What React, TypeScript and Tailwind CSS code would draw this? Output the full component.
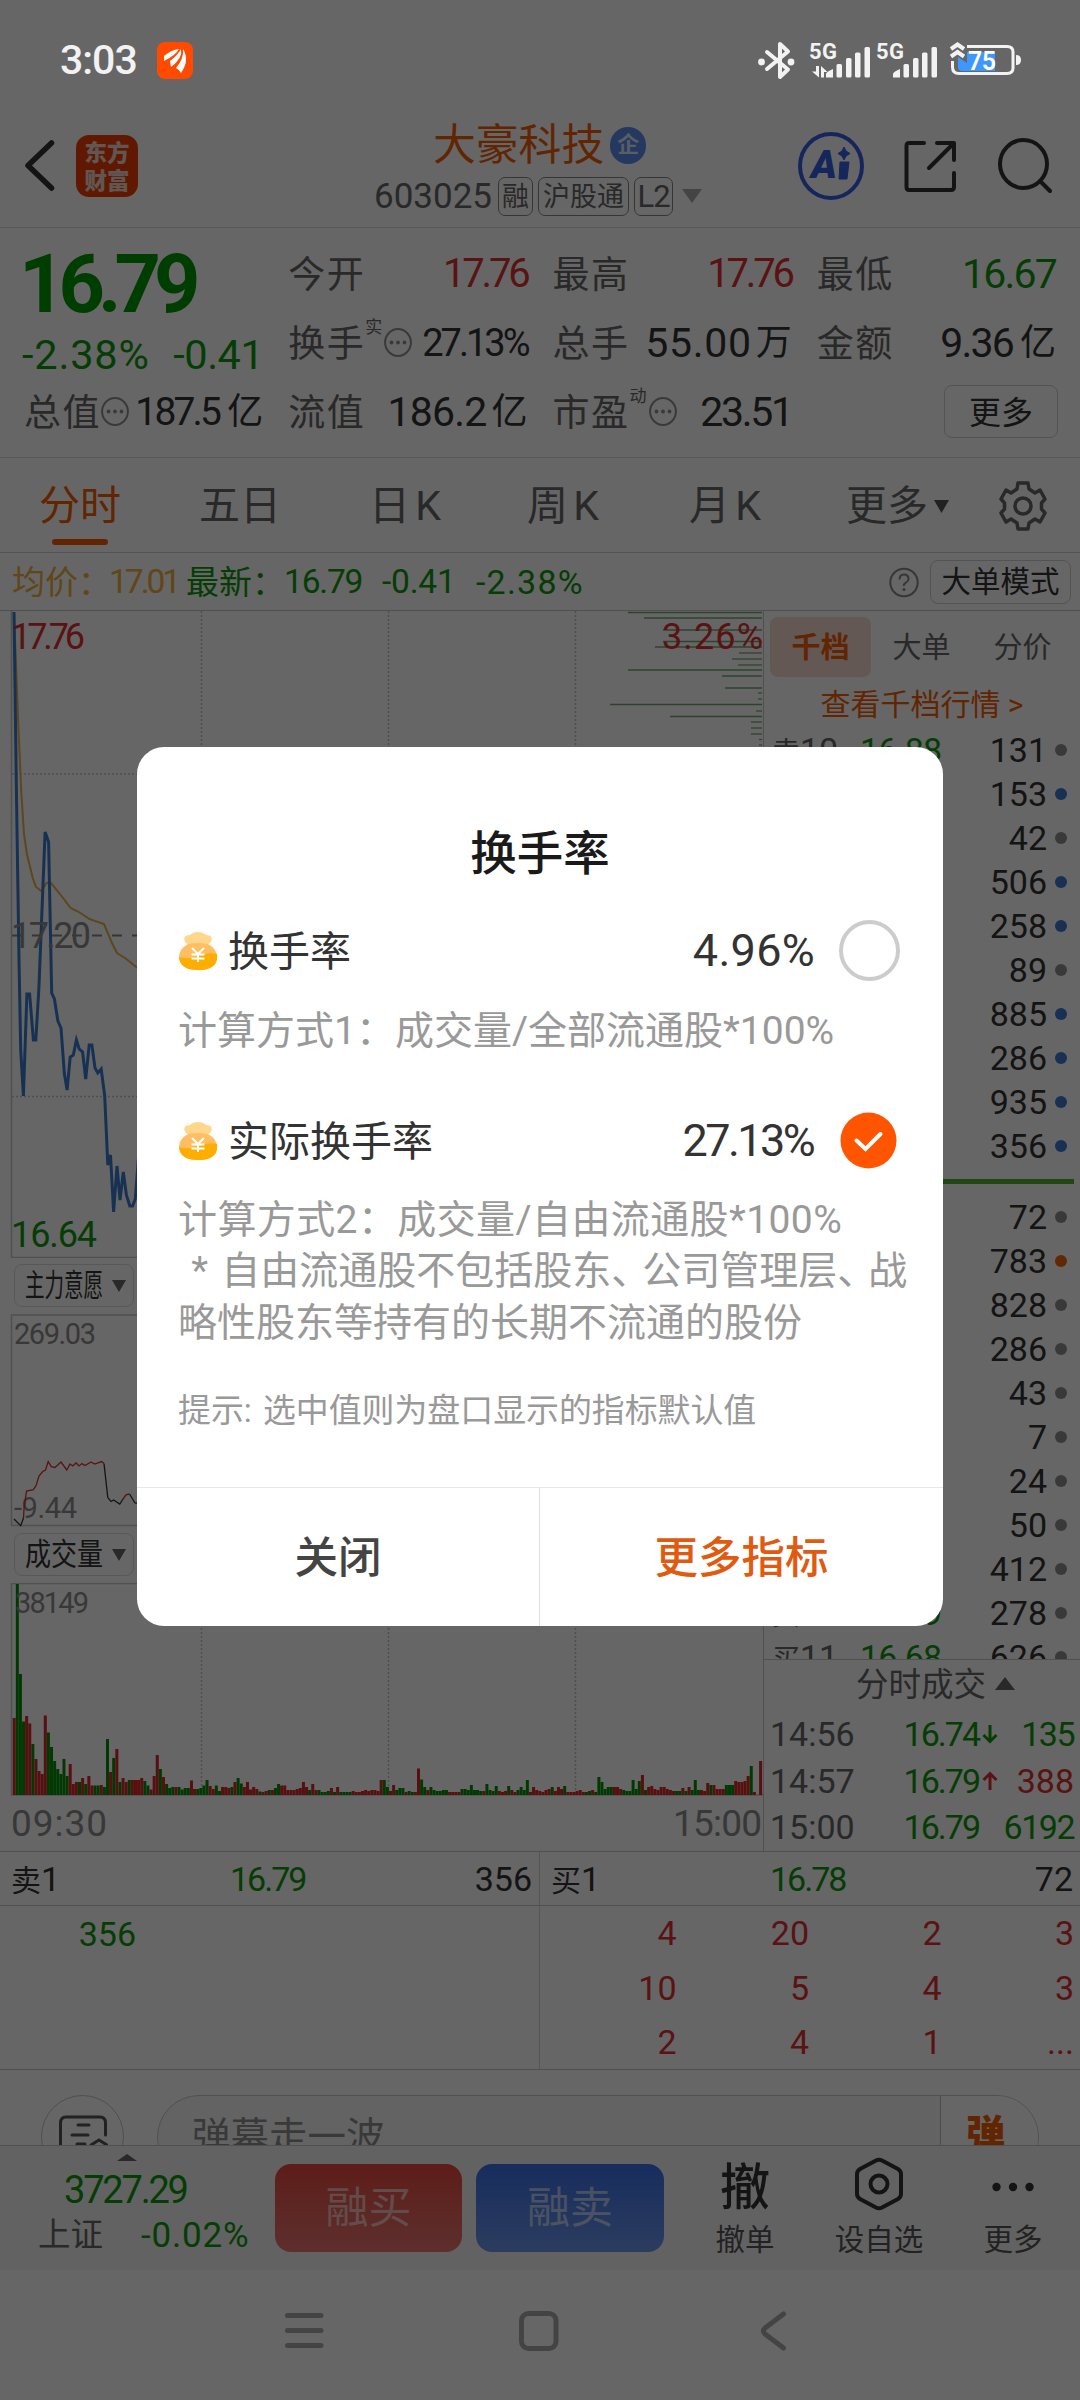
import type { ReactNode } from "react";

const sellSizes = [131, 153, 42, 506, 258, 89, 885, 286, 935, 356];
const sellDots = "gbgbbgbbbb";
const buySizes = [72, 783, 828, 286, 43, 7, 24, 50, 412, 278, 626];
const buyDots = "gogggggggggg";

const dotColor: Record<string, string> = {
  g: "bg-[#8f8f92]",
  b: "bg-[#3b78d0]",
  o: "bg-[#f2640a]",
};

const trades = [
  { time: "14:56", price: "16.74", arrow: "down", size: "135", red: false },
  { time: "14:57", price: "16.79", arrow: "up", size: "388", red: true },
  { time: "15:00", price: "16.79", arrow: "", size: "6192", red: false },
];

const buyQueue = ["4", "20", "2", "3", "10", "5", "4", "3", "2", "4", "1", "..."];

// one bar per minute, positive = up (red), negative = down (green)
const volumes = [
  77, -211, -121, -73.5, 79, 71.5, -51, 36, 24, 21, 79.5, -62.5, -48, -34, -26, -21, -36, -19, 31, 11,
  13, -13, 17, -11, 19, 9.5, -9.5, -9.5, 10, -8, -56, 23, -37, 46, -13, 17, 13, -15, 15, 15,
  15, 17, -14, -9.5, 5.5, 19, 40, -26, 18, -11, -7, -8, 8, -8, -5.5, -7, -7, 14.5, 6, -6,
  -7, -9.5, -15, 9, 6, -9.5, -4, 8, 8, 7, -8, 13, -17, -11.5, 8, 13, 5.5, 8, 6, -3.5,
  3, 4, -5, 5, -7, -11, 9.5, 9.5, 5, 5, 5, 6, 7, 13, 8, -5, 11, 5, -5, -3,
  -3, -4, 7, -3, 8, -3, -3, -3, -3, 4, 3, 3, 4, 5, 4, 5, 5, 4, 15, -15,
  -8, 4, 10, -5, -7, -7, 3, -4, -3, 3, 26.5, -15.5, -8, 5, -8, -5, -4, -4, -5, -5,
  3, 3, 3, 3, -6, -6, -5, -10, -5, -5, -4, 4, -11, -5, -4, -9, 4, 3, 4, -9,
  5, 3, -5, -8, -5, -15, 3, 8, 5, 4, 3, 5, 6, -8, 4, 8, 6, -9, 3, 3,
  3, 4, 5, 3, -3, -4, 5, -3, -18, -13, -6, -8, -8, 8, 8, 6, -5, -4, -4, -15,
  -6, -14, 20, -5, 8, 9, 6, 5, 8, 8, 6, 5, 4, -4, -4, 7, -4, 8, -5, -15,
  -5, 5, 4, 12, -10, 10, 6, 6, 6, -10, -10, -10, 14, 13, 13, 14, 19, -29, 3, 0,
  34,
];

const depthBars = [
  [628, 611.5], [644, 617], [663, 629], [663, 640.5], [655, 646], [739, 652], [732, 658], [738, 664],
  [628, 669], [722, 675], [725, 687], [758, 692], [758, 698], [610, 703.5], [756, 710], [670, 715.5],
  [751, 721], [751, 727], [751, 733], [759, 738.5], [759, 744],
];

function MoreDots() {
  return (
    <svg width="28" height="29" viewBox="0 0 28 29" className="shrink-0">
      <ellipse cx="14" cy="14.5" rx="12.9" ry="13.4" fill="none" stroke="#8f8f8f" strokeWidth="2" />
      <circle cx="7.5" cy="14.5" r="1.9" fill="#8f8f8f" />
      <circle cx="14" cy="14.5" r="1.9" fill="#8f8f8f" />
      <circle cx="20.5" cy="14.5" r="1.9" fill="#8f8f8f" />
    </svg>
  );
}

function Quote({ label, sup, dots, children }: { label: string; sup?: string; dots?: boolean; children: ReactNode }) {
  return (
    <div className="flex h-[69px] items-center">
      <span className="whitespace-nowrap pt-[3px] text-[37px] tracking-[1.500px] text-[#666]">{label}</span>
      {sup && <span className="mb-[31px] w-[19px] text-[17px] text-[#666]">{sup}</span>}
      {dots && <MoreDots />}
      <span className="ml-auto flex items-center whitespace-nowrap pt-px text-[#333]">{children}</span>
    </div>
  );
}

function StatusBar() {
  return (
    <div className="relative z-20 flex h-[119px] items-start text-[#f2f2f2]">
      <span className="ml-[60px] mt-[40px] text-[41px] font-medium tracking-[-1px]">3:03</span>
      <svg width="36" height="37" viewBox="0 0 36 37" className="absolute left-[157px] top-[42px]">
        <rect width="36" height="37" rx="8" fill="#ff4a00" />
        <path d="M7 14 Q14 8 22 7 Q19 13 7 19Z M13 19 Q20 14 24 7 Q26 16 14 25Z M19 26 Q27 17 26 7 Q33 18 24 31Q23 28 19 26Z" fill="#fff" />
      </svg>
      <svg width="270" height="44" viewBox="0 0 270 44" className="absolute left-[755px] top-[38px]">
        <path d="M12 14 L33 31.500 L25 39 V6 L33 13.500 L12 31" fill="none" stroke="#f2f2f2" strokeWidth="4" strokeLinejoin="round" strokeLinecap="round" />
        <circle cx="6.500" cy="24" r="3.400" fill="#f2f2f2" />
        <circle cx="36" cy="24" r="3.400" fill="#f2f2f2" />
        <g fill="#f2f2f2">
          <text x="54" y="21" fontSize="22" fontWeight="700" textLength="28">5G</text>
          <text x="121" y="21" fontSize="22" fontWeight="700" textLength="28">5G</text>
          <path d="M61 28 h3 v11.500 l-7 -6 h4z M66 39.500 v-11.500 l6.500 6 h-3.500 v5.500z" />
          {[0, 67].map((x) => (
            <g key={x}>
              <path d={`M${x + 71} 36 q0 -2 7 -5 v8.500 h-7z`} />
              <rect x={x + 81.5} y="26" width="5.500" height="13.500" rx="1.500" />
              <rect x={x + 91} y="20" width="5.500" height="19.500" rx="1.500" />
              <rect x={x + 100} y="14.500" width="5.500" height="25" rx="1.500" />
              <rect x={x + 109.5} y="9" width="5.500" height="30.500" rx="1.500" />
            </g>
          ))}
        </g>
        <path d="M212 8.500 H252 Q258 8.500 258 14 V30 Q258 35.500 252 35.500 H204 Q197.500 35.500 197.500 29 V23" fill="none" stroke="#f2f2f2" strokeWidth="3" />
        <path d="M203 19 l9 6 v-11 h28 v19 h-33 q-4 0 -4 -4z" fill="#3e97fb" />
        <path d="M196 11 l6.500 -4.500 l6.500 4.500 M196 18.500 l6.500 -4.500 l6.500 4.500" fill="none" stroke="#f2f2f2" strokeWidth="4" />
        <text x="213" y="32" fontSize="25" fontWeight="600" fill="#fff" textLength="28">75</text>
        <path d="M261 17 q5 0 5 5 t-5 5z" fill="#f2f2f2" />
      </svg>
    </div>
  );
}

function Header() {
  return (
    <div className="flex h-[109px] items-start border-b border-[#dcdcdc]">
      <svg width="34" height="56" viewBox="0 0 34 56" className="ml-[22px] mt-[19px]">
        <path d="M29.500 5 L6 27.500 L29.500 50" fill="none" stroke="#333" strokeWidth="5.500" strokeLinecap="round" strokeLinejoin="round" />
      </svg>
      <div className="ml-[20px] mt-[16px] flex h-[62px] w-[62px] flex-col items-center justify-center gap-[5px] rounded-[13px] bg-[#f04000] pt-[2px] text-[22.500px] font-black text-[#f0d8d0]">
        <span>东方</span>
        <span>财富</span>
      </div>
      <div className="ml-[236px] w-[336px]">
        <div className="flex items-center pl-[59px] pt-[5px] text-[#f25c05]">
          <span className="text-[42.800px]">大豪科技</span>
          <span className="ml-[6px] flex h-[37px] w-[36px] items-center justify-center rounded-full bg-[#5a8cf0] text-[22px] font-bold text-[#e0e8fa]">企</span>
        </div>
        <div className="mt-[10px] flex items-center text-[#666]">
          <span className="text-[35px]">603025</span>
          <span className="ml-[6px] flex h-[39px] w-[35px] items-center justify-center rounded-[7px] border border-[#888] pt-[2px] text-[27px]">融</span>
          <span className="ml-[5px] flex h-[39px] w-[91px] items-center justify-center rounded-[7px] border border-[#888] pt-[2px] text-[27px]">沪股通</span>
          <span className="ml-[5px] flex h-[39px] w-[39px] items-center justify-center rounded-[7px] border border-[#888] pt-px text-[31px] tracking-[-1px]">L2</span>
          <svg width="20" height="14" className="ml-[9px]">
            <path d="M0 0 H20 L10 14Z" fill="#aaa" />
          </svg>
        </div>
      </div>
      <svg width="66" height="68" viewBox="0 0 66 68" className="ml-[88px] mt-[13px]">
        <ellipse cx="33" cy="34" rx="31" ry="32" fill="none" stroke="#3560e8" strokeWidth="4" />
        <text x="13" y="46" fontSize="38" fontWeight="900" fontStyle="italic" fill="#3560e8" textLength="26" lengthAdjust="spacingAndGlyphs">A</text>
        <path d="M42 30 h9 l-2 17 h-8z M46 15 l2 4 4 2.500 -4 2.500 -2 4 -2 -4 -4 -2.500 4 -2.500z" fill="#3560e8" stroke="#3560e8" />
      </svg>
      <svg width="54" height="54" viewBox="0 0 54 54" className="ml-[39px] mt-[20px]" fill="none" stroke="#333" strokeWidth="4" strokeLinecap="round" strokeLinejoin="round">
        <path d="M21 4 H6 Q3.500 4 3.500 7 V48 Q3.500 51 6 51 H48 Q51 51 51 48 V34" />
        <path d="M34 4 H51 V21 M51 4 L26 29" />
      </svg>
      <svg width="56" height="56" viewBox="0 0 56 56" className="ml-[40px] mt-[19px]" fill="none" stroke="#333" strokeWidth="4" strokeLinecap="round">
        <ellipse cx="26.500" cy="26" rx="23.500" ry="24" />
        <path d="M43 43 L53 53" />
      </svg>
    </div>
  );
}

function QuoteGrid() {
  return (
    <div className="grid h-[230px] grid-cols-4 gap-x-[25px] border-b border-[#dcdcdc] px-6 pt-[11px]">
      <div>
        <div className="-ml-[5px] flex h-[91px] items-center text-[81px] font-bold tracking-[-7px] text-[#009900]">16.79</div>
        <div className="-ml-[2px] flex h-[50px] items-center justify-between text-[41.500px] text-[#0d9a0d]">
          <span className="tracking-[0.8px]">-2.38%</span>
          <span className="tracking-[-0.5px]">-0.41</span>
        </div>
        <div className="-mt-[3px]">
          <Quote label="总值" dots>
            <span className="text-[39px] tracking-[-2.800px]">187.5</span>
            <span className="ml-[8px] text-[36px]">亿</span>
          </Quote>
        </div>
      </div>
      <div>
        <Quote label="今开"><span className="text-[40px] tracking-[-3.200px] text-[#e03030]">17.76</span></Quote>
        <Quote label="换手" sup="实" dots><span className="text-[38px] tracking-[-3px]">27.13%</span></Quote>
        <Quote label="流值">
          <span className="text-[41px] tracking-[-0.8px]">186.2</span>
          <span className="ml-[5px] text-[36px]">亿</span>
        </Quote>
      </div>
      <div>
        <Quote label="最高"><span className="text-[40px] tracking-[-3.200px] text-[#e03030]">17.76</span></Quote>
        <Quote label="总手">
          <span className="text-[41px] tracking-[0.7px]">55.00</span>
          <span className="ml-[4px] text-[36px]">万</span>
        </Quote>
        <Quote label="市盈" sup="动" dots><span className="text-[41px] tracking-[-2.300px]">23.51</span></Quote>
      </div>
      <div>
        <Quote label="最低"><span className="text-[41px] tracking-[-1.800px] text-[#0d9a0d]">16.67</span></Quote>
        <Quote label="金额">
          <span className="text-[41px] tracking-[-1.800px]">9.36</span>
          <span className="ml-[7px] text-[36px]">亿</span>
        </Quote>
        <div className="-mr-[2px] ml-auto mt-[8px] flex h-[53px] w-[114px] items-center justify-center rounded-lg border border-[#d0d0d0] pt-[2px] text-[32px] text-[#333]">更多</div>
      </div>
    </div>
  );
}

function ChartTabs() {
  return (
    <div className="flex h-[95px] items-center border-b border-[#d2d2d2] pt-[2px] text-[41px] text-[#666] [word-spacing:-5px]">
      <div className="relative ml-[39px] w-[160px] text-[#f25c05]">
        分时
        <span className="absolute left-[13px] top-[53px] h-[6px] w-[56px] rounded-full bg-[#f25c05]" />
      </div>
      <span className="w-[170px]">五日</span>
      <span className="w-[158px]">日 K</span>
      <span className="w-[162px]">周 K</span>
      <span className="w-[157px]">月 K</span>
      <span>更多</span>
      <svg width="15" height="13" className="ml-[6px]">
        <path d="M0 0 H15 L7.500 13Z" fill="#555" />
      </svg>
      <svg width="50" height="54" viewBox="0 0 50 54" className="ml-[49px]" fill="none" stroke="#666" strokeWidth="3.500" strokeLinejoin="round">
        <path d="M20 4 H30 L31 10 L37 14 L42 11 L47 20 L43.500 24 V30 L47 34 L42 43 L37 40 L31 44 L30 50 H20 L19 44 L13 40 L8 43 L3 34 L6.500 30 V24 L3 20 L8 11 L13 14 L19 10Z" />
        <circle cx="25" cy="27" r="8" />
      </svg>
    </div>
  );
}

function PriceBar() {
  return (
    <div className="flex h-[57px] items-center pt-px text-[33.500px] text-[#0d9a0d]">
      <span className="ml-[12px] w-[97px] whitespace-nowrap text-[33px] text-[#f0b040]">均价：</span>
      <span className="w-[77px] tracking-[-3px] text-[#f0b040]">17.01</span>
      <span className="w-[98px] whitespace-nowrap text-[33px]">最新：</span>
      <span className="w-[98px] tracking-[-1.200px]">16.79</span>
      <span className="w-[94px] tracking-[-0.2px]">-0.41</span>
      <span className="text-[34px] tracking-[1.200px]">-2.38%</span>
      <svg width="30" height="31" viewBox="0 0 30 31" className="ml-auto">
        <circle cx="15" cy="15.500" r="13.700" fill="none" stroke="#888" strokeWidth="2" />
        <path d="M10.500 12.500 q0 -5 4.500 -5 t4.500 4.500 q0 2 -2.500 3.500 t-2 3.500" fill="none" stroke="#888" strokeWidth="2" />
        <circle cx="15" cy="22.500" r="1.500" fill="#888" />
      </svg>
      <span className="ml-[11px] mr-[9px] flex h-[44px] w-[141px] items-center justify-center rounded-lg border border-[#d0d0d0] pt-[2px] text-[29.500px] text-[#333]">大单模式</span>
    </div>
  );
}

function IndicatorButton({ label, narrow }: { label: string; narrow?: boolean }) {
  return (
    <div className="ml-[14px] flex h-[43px] w-[120px] items-center rounded-lg border border-[#dcdcdc] pl-[10px] text-[31px] text-[#333]">
      <span className="w-[78px] whitespace-nowrap">
        <span className={narrow ? "inline-block origin-left scale-x-[0.63]" : "inline-block origin-left scale-x-[0.84]"}>{label}</span>
      </span>
      <svg width="14" height="12" className="ml-[9px] shrink-0">
        <path d="M0 0 H14 L7 12Z" fill="#666" />
      </svg>
    </div>
  );
}

function Charts() {
  return (
    <div className="w-[764px] border-r border-[#c8c8c8]">
      <svg width="763" height="647" viewBox="0 610 763 647" className="block">
        <g stroke="#c4c4c4" strokeWidth="1.500" strokeDasharray="2 2">
          <path d="M201.500 610 V1257 M388.500 610 V1257 M575.500 610 V1257" />
          <path d="M12 773 H763 M12 1095.500 H763" />
        </g>
        <path d="M12 934.500 H763" stroke="#888" strokeWidth="2" strokeDasharray="10 10" />
        <path d="M11.500 610 V1256.500 H763" fill="none" stroke="#c8c8c8" strokeWidth="1.500" />
        {depthBars.map(([x, y]) => (
          <path key={y} d={`M${x} ${y} H762`} stroke="#74a874" strokeWidth="1.300" />
        ))}
        <path
          d="M14 611 L18.600 731 L21.300 792 L24 833 L26.900 853 L32.700 877 L36 886 L41.300 890 L46.500 882 L51 882 L60 893 L70.600 907 L79 911 L89.500 918 L104 923 L112 942 L117 952 L125.700 957.500 L137 966.500 L170 975"
          fill="none" stroke="#eab04a" strokeWidth="2"
        />
        <path
          d="M14 611 L16.500 796 L19 959 L20.700 1049 L23.400 1095 L26.900 993 L29.600 993 L33.400 1039 L35.800 1039 L38.900 987 L45.100 831 L48.600 841 L51.700 992 L54.400 998 L57.900 1020 L61 1027 L64.400 1073 L67.100 1089 L70.200 1056 L73.300 1054 L76.400 1039 L79.200 1048 L82.600 1051 L85.700 1078 L89.200 1044 L91.900 1044 L95 1067 L97.800 1072 L101.200 1068 L104.700 1095 L107.800 1164 L110.500 1154 L113.600 1211 L117 1165 L120 1199 L123.300 1171 L126.400 1194 L129.800 1205 L132.600 1205 L135.300 1198 L139 1150"
          fill="none" stroke="#3a7cd0" strokeWidth="3"
        />
        <text x="11" y="648" fontSize="36" fill="#e03030" textLength="74">17.76</text>
        <text x="662" y="648" fontSize="36" fill="#e03030" textLength="101">3.26%</text>
        <text x="11" y="947" fontSize="36" fill="#8c8c8c" textLength="80">17.20</text>
        <text x="11" y="1246" fontSize="36" fill="#0d9a0d" textLength="86">16.64</text>
      </svg>
      <div className="pt-[6px]"><IndicatorButton label="主力意愿" narrow /></div>
      <svg width="763" height="213" viewBox="0 1314 763 213" className="mt-[7px] block">
        <path d="M763 1315 H11.500 V1525.500 H763" fill="none" stroke="#c8c8c8" strokeWidth="1.500" />
        <text x="14" y="1344" fontSize="29" fill="#8c8c8c" textLength="82">269.03</text>
        <text x="14" y="1518" fontSize="29" fill="#8c8c8c" textLength="63">-9.44</text>
        <path
          d="M23.500 1518 L24 1509 L26.500 1491 L33.400 1489.700 L36 1485.700 L39 1476 L42.700 1471.500 L45.500 1470 L48.200 1461.600 L51.300 1466.700 L55 1467.500 L61 1462 L66.800 1470 L70 1464 L72.700 1466 L76 1463 L79 1466 L82 1463.600 L85 1465.500 L91 1462 L94.700 1464 L101.600 1461.600 L104 1463.600"
          fill="none" stroke="#e03030" strokeWidth="1.300"
        />
        <path
          d="M14 1519 L20.700 1525.600 L23.500 1518 M104 1463.600 L107.800 1497.600 L111 1501.500 L113.600 1500 L119.800 1504 L123 1499"
          fill="none" stroke="#333" strokeWidth="1.300"
        />
        <path d="M123 1499 L126 1494.800 L129.500 1494" fill="none" stroke="#e03030" strokeWidth="1.300" />
        <path d="M129.500 1494 L135 1503 L145 1504" fill="none" stroke="#333" strokeWidth="1.300" />
      </svg>
      <div className="pt-[6px]"><IndicatorButton label="成交量" /></div>
      <svg width="763" height="269" viewBox="0 1583 763 269" className="mt-[7px] block">
        <path d="M201.500 1584 V1795 M388.500 1584 V1795 M575.500 1584 V1795" stroke="#c4c4c4" strokeWidth="1.500" strokeDasharray="2 2" />
        <path d="M763 1583.500 H11.500 V1795 H763" fill="none" stroke="#c8c8c8" strokeWidth="1.500" />
        {volumes.map((v, i) => (
          <rect key={i} x={12.7 + i * 3.11} y={1795 - Math.abs(v)} width="3" height={Math.abs(v)} fill={v > 0 ? "#d92626" : "#079007"} />
        ))}
        <text x="15" y="1613" fontSize="29" fill="#8c8c8c" textLength="74">38149</text>
        <text x="11" y="1836" fontSize="37" fill="#8c8c8c" textLength="96">09:30</text>
        <text x="673" y="1836" fontSize="37" fill="#8c8c8c" textLength="89">15:00</text>
      </svg>
    </div>
  );
}

function BookRow({ label, price, size, dot }: { label: string; price: string; size: number; dot: string }) {
  return (
    <div className="flex h-[44px] items-center text-[34px]">
      <span className="w-[88px] whitespace-nowrap text-[#666]"><span className="text-[28px]">{label[0]}</span>{label.slice(1)}</span>
      <span className="w-[80px] tracking-[-0.8px] text-[#0d9a0d]">{price}</span>
      <span className="w-[107px] text-right text-[#333]">{size}</span>
      <span className={`ml-[8px] h-[12px] w-[12px] rounded-full ${dotColor[dot]}`} />
    </div>
  );
}

function OrderBook() {
  return (
    <div className="flex w-[316px] flex-col">
      <div className="flex pl-[6px] pt-[6px] text-[29px] text-[#666]">
        <span className="flex h-[60px] w-[101px] items-center justify-center rounded-lg bg-[#f8ddd2] pt-[2px] font-bold text-[#f25c05]">千档</span>
        <span className="flex h-[60px] w-[101px] items-center justify-center pt-[2px]">大单</span>
        <span className="flex h-[60px] w-[101px] items-center justify-center pt-[2px]">分价</span>
      </div>
      <div className="flex h-[51px] items-center justify-center pt-[4px] text-[30px] text-[#f25c05]">查看千档行情 &gt;</div>
      <div className="h-[931px] overflow-hidden pl-[8px]">
        {sellSizes.map((size, i) => (
          <BookRow key={i} label={`卖${10 - i}`} price={(16.88 - i * 0.01).toFixed(2)} size={size} dot={sellDots[i]} />
        ))}
        <div className="mb-[11px] mt-[11px] h-[5px] w-[302px] bg-[#55b035]" />
        {buySizes.map((size, i) => (
          <BookRow key={i} label={`买${i + 1}`} price={(16.78 - i * 0.01).toFixed(2)} size={size} dot={buyDots[i]} />
        ))}
      </div>
      <div className="flex h-[52px] items-center justify-center border-t border-[#c8c8c8] pl-[27px] text-[32.500px] text-[#666]">
        分时成交
        <svg width="20" height="13" className="mb-[4px] ml-[9px]">
          <path d="M0 13 H20 L10 0Z" fill="#666" />
        </svg>
      </div>
      <div className="flex-1 pl-[6px]">
        {trades.map((t) => (
          <div key={t.time} className="flex h-[46.500px] items-center text-[34px]">
            <span className="w-[112px] text-[#666]">{t.time}</span>
            <span className="w-[97px] text-right tracking-[-2px] text-[#0d9a0d]">{t.price}</span>
            <svg width="16" height="20" viewBox="0 0 16 20" className="ml-[3px]" fill="none" strokeWidth="3">
              {t.arrow === "down" && <path d="M8 1 V17 M1.500 11 L8 17.500 L14.500 11" stroke="#0d9a0d" />}
              {t.arrow === "up" && <path d="M8 19 V3 M1.500 9 L8 2.500 L14.500 9" stroke="#e03030" />}
            </svg>
            <span className={t.red ? "w-[76px] text-right text-[#e03030]" : "w-[76px] text-right tracking-[-1.500px] text-[#0d9a0d]"}>{t.size}</span>
          </div>
        ))}
      </div>
    </div>
  );
}

function Level({ label, price, size }: { label: string; price: string; size: string }) {
  return (
    <div className="flex h-[54px] items-center border-b border-[#c8c8c8] pl-[11px] pr-[7px] text-[34px] text-[#333]">
      <span className="w-[219px]"><span className="text-[30px]">{label[0]}</span>{label[1]}</span>
      <span className="tracking-[-2px] text-[#0d9a0d]">{price}</span>
      <span className="ml-auto">{size}</span>
    </div>
  );
}

function Queues() {
  return (
    <div className="flex h-[219px] border-y border-[#c8c8c8]">
      <div className="w-[540px] border-r border-[#d8d8d8]">
        <Level label="卖1" price="16.79" size="356" />
        <div className="flex h-[55px] w-[136px] items-center justify-end text-[34px] text-[#0d9a0d]">356</div>
      </div>
      <div className="w-[540px]">
        <Level label="买1" price="16.78" size="72" />
        <div className="grid grid-cols-4 pl-[4px] pr-[6px] text-[34px] text-[#e03030]">
          {buyQueue.map((q, i) => (
            <span key={i} className="flex h-[54.500px] items-center justify-end">{q}</span>
          ))}
        </div>
      </div>
    </div>
  );
}

function CommentBar() {
  return (
    <div className="flex h-[75px] items-start overflow-hidden pt-[25px]">
      <span className="ml-[41px] flex h-[83px] w-[83px] shrink-0 items-start justify-center rounded-full border border-[#c0c4c4] pt-[19px]">
        <svg width="50" height="50" viewBox="0 0 50 50" fill="none" stroke="#555" strokeWidth="3" strokeLinecap="round">
          <path d="M2.500 50 V8 Q2.500 2 8 2 H42 Q47.500 2 47.500 8 V20" />
          <path d="M20 10 H31 M14 20 H30 M19 29 H27 M33 30 L41 25 L49 30" />
        </svg>
      </span>
      <div className="ml-[33px] flex h-[84px] w-[882px] shrink-0 overflow-hidden rounded-full border border-[#c8c8c8] bg-[#f7f7f7]">
        <span className="flex-1 pl-[34px] pt-[22px] text-[38.500px] text-[#909090]">弹幕走一波</span>
        <span className="w-[98px] border-l border-[#c0c0c0] bg-white pl-[25px] pt-[20px] text-[39px] font-black text-[#f25c05]">弹</span>
      </div>
    </div>
  );
}

function BottomBar() {
  return (
    <div className="flex h-[125px] border-t border-[#c8c8c8] bg-[#f5f5f5]">
      <div className="relative flex w-[275px] flex-col pt-[25px] text-[#0d9a0d]">
        <svg width="20" height="7" className="absolute left-[117px] top-[8px]">
          <path d="M0 7 H20 L10 0Z" fill="#666" />
        </svg>
        <span className="pl-[64px] text-[38px] tracking-[-2.200px]">3727.29</span>
        <div className="mt-[9px] flex items-center">
          <span className="ml-[38px] w-[103px] text-[32.500px] text-[#666]">上证</span>
          <span className="text-[35px] tracking-[0.8px]">-0.02%</span>
        </div>
      </div>
      <div className="mt-[18px] flex h-[88px] w-[187px] items-center justify-center rounded-2xl bg-linear-to-b from-[#e8483f] to-[#e87570] text-[43px] text-white/60">融买</div>
      <div className="ml-[14px] mt-[18px] flex h-[88px] w-[188px] items-center justify-center rounded-2xl bg-linear-to-b from-[#3a70e8] to-[#6e97ee] text-[43px] text-white/60">融卖</div>
      <div className="flex flex-1 text-[29.500px] text-[#555]">
        <div className="ml-[24px] flex w-[114px] flex-col items-center">
          <span className="mt-[17px] h-[50px] text-[50px] font-medium text-[#333]">撤</span>
          <span className="mt-[13px]">撤单</span>
        </div>
        <div className="ml-[17px] flex w-[120px] flex-col items-center">
          <svg width="50" height="54" viewBox="0 0 50 54" className="mt-[11px]" fill="none" stroke="#333" strokeWidth="4" strokeLinejoin="round">
            <path d="M22 3.500 Q25 2 28 3.500 L44 12 Q47 14 47 17 V37 Q47 40 44 42 L28 50.500 Q25 52 22 50.500 L6 42 Q3 40 3 37 V17 Q3 14 6 12Z" />
            <circle cx="25" cy="27" r="8.500" />
          </svg>
          <span className="mt-[15px]">设自选</span>
        </div>
        <div className="ml-[24px] flex w-[100px] flex-col items-center">
          <svg width="42" height="10" viewBox="0 0 42 10" className="mt-[36px]" fill="#333">
            <circle cx="4.500" cy="5" r="4.200" />
            <circle cx="21" cy="5" r="4.200" />
            <circle cx="37.500" cy="5" r="4.200" />
          </svg>
          <span className="mt-[34px]">更多</span>
        </div>
      </div>
    </div>
  );
}

function NavBar() {
  return (
    <div className="flex flex-1 items-start justify-center pt-[40px]">
      <svg width="520" height="44" viewBox="0 0 520 44" fill="none" stroke="#ababab" strokeWidth="5" strokeLinecap="round" strokeLinejoin="round">
        <path d="M7.500 5.500 H41 M7.500 20.500 H41 M7.500 35.500 H41" />
        <rect x="241.500" y="3.500" width="34.500" height="35" rx="7" />
        <path d="M503.500 4 L485 18 Q482 21 485 24 L503.500 38" />
      </svg>
    </div>
  );
}

function MoneyBag() {
  return (
    <svg width="40" height="38" viewBox="0 0 40 38" className="shrink-0">
      <path d="M7 10 Q4 3 12 3 Q15 0 20 0 Q25 0 28 3 Q36 3 33 10 Q30 14 20 14 Q10 14 7 10Z" fill="#ffd78c" />
      <path d="M10 12 Q20 10 30 12 Q39 17 39 25 Q38 38 20 38 Q2 38 1 25 Q1 17 10 12Z" fill="#ffbe62" />
      <path d="M1 25 Q10 28 20 24 Q30 20 39 22 Q41 38 20 38 Q2 38 1 25Z" fill="#ffae00" />
      <path d="M14 16 L20 22 L26 16 M20 22 V30 M13.500 22.500 H26.500 M13.500 26.500 H26.500" fill="none" stroke="#fff" strokeWidth="2" />
    </svg>
  );
}

function TurnoverDialog() {
  return (
    <div className="absolute left-[137px] top-[747px] z-20 flex h-[879px] w-[806px] flex-col rounded-[27px] bg-white">
      <h2 className="mt-[84px] text-center text-[46.500px] font-medium text-[#1a1a1a]">换手率</h2>
      <div className="mt-[42px] flex h-[62px] items-center pl-[41px] pr-[43px] text-[41px] text-[#333]">
        <MoneyBag />
        <span className="ml-[10px] pt-[3px]">换手率</span>
        <span className="ml-auto text-[45px] tracking-[0.3px]">4.96%</span>
        <span className="ml-[24px] h-[61px] w-[61px] rounded-full border-[4px] border-[#ccc]" />
      </div>
      <p className="mt-[30px] pl-[41px] text-[39px] text-[#999]">计算方式1：成交量/全部流通股*100%</p>
      <div className="mt-[59px] flex h-[62px] items-center pl-[41px] pr-[46px] text-[41px] text-[#333]">
        <MoneyBag />
        <span className="ml-[10px] pt-[3px]">实际换手率</span>
        <span className="ml-auto text-[45px] tracking-[-2.600px]">27.13%</span>
        <svg width="57" height="57" viewBox="0 0 57 57" className="ml-[27px]">
          <circle cx="28.500" cy="28.500" r="28" fill="#ff5500" />
          <path d="M16.500 28.500 L25.500 37 L40.500 22" fill="none" stroke="#fff" strokeWidth="4" strokeLinecap="round" />
        </svg>
      </div>
      <div className="mt-[23px] whitespace-nowrap pl-[41px] text-[39px] leading-[51.700px] text-[#999]">
        <p className="tracking-[0.4px]">计算方式2：成交量/自由流通股*100%</p>
        <p className="whitespace-pre [word-spacing:3.500px]"> * 自由流通股不包括股东<span className="-mr-[8px]">、</span>公司管理层<span className="-mr-[8px]">、</span>战</p>
        <p>略性股东等持有的长期不流通的股份</p>
      </div>
      <p className="mt-[45px] pl-[41px] text-[32.900px] text-[#999] [word-spacing:3px]">提示: 选中值则为盘口显示的指标默认值</p>
      <div className="mt-auto flex h-[139px] border-t border-[#e8e8e8] pt-px text-[43.500px] font-medium">
        <button className="-mt-px w-[403px] border-r border-[#e0e0e0] pt-[3px] text-[#444]">关闭</button>
        <button className="-mt-px flex-1 pt-[3px] text-[#e05a10]">更多指标</button>
      </div>
    </div>
  );
}

export default function App() {
  return (
    <div className="relative flex h-[2400px] w-[1080px] flex-col overflow-hidden bg-white font-[Roboto,'Noto_Sans_CJK_SC',sans-serif] leading-none">
      <StatusBar />
      <Header />
      <QuoteGrid />
      <ChartTabs />
      <PriceBar />
      <div className="flex h-[1241px] border-t border-[#c8c8c8]">
        <Charts />
        <OrderBook />
      </div>
      <Queues />
      <CommentBar />
      <BottomBar />
      <NavBar />
      <div className="absolute inset-0 z-10 bg-black/60" />
      <TurnoverDialog />
    </div>
  );
}
